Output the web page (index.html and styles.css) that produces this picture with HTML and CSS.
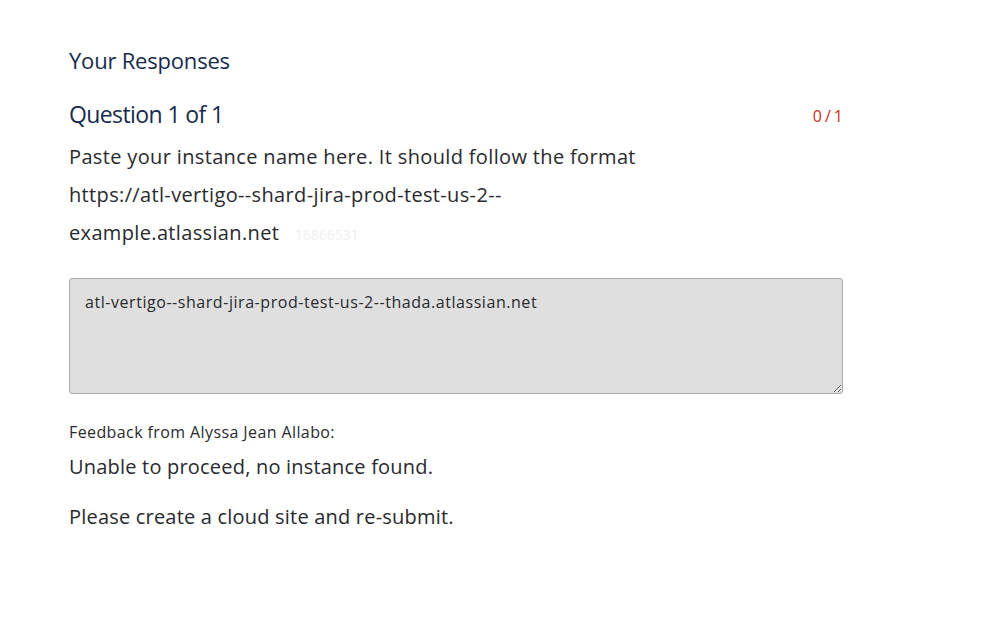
FILE: index.html
```html
<!DOCTYPE html>
<html>
<head>
<meta charset="utf-8">
<link rel="stylesheet" href="styles.css">
</head>
<body>
<main class="page">
  <h2 class="title">Your Responses</h2>
  <div class="qhead">
    <h3 class="qtitle">Question 1 of 1</h3>
    <span class="score">0/1</span>
  </div>
  <p class="prompt">Paste your instance name here. It should follow the format https://atl-vertigo--shard-jira-prod-test-us-2--<br>example.atlassian.net <span class="qid">16866531</span></p>
  <textarea class="answer" readonly>atl-vertigo--shard-jira-prod-test-us-2--thada.atlassian.net</textarea>
  <div class="feedback-label">Feedback from Alyssa Jean Allabo:</div>
  <p class="feedback">Unable to proceed, no instance found.</p>
  <p class="feedback">Please create a cloud site and re-submit.</p>
</main>
</body>
</html>
```
FILE: styles.css
```css
html, body {
  margin: 0;
  padding: 0;
  background: #fff;
}
body {
  font-family: "Open Sans", "Liberation Sans", sans-serif;
  color: #292a2e;
}
.page {
  width: 774px;
  padding: 44px 0 40px 69px;
}
.title {
  margin: 0;
  font-size: 22px;
  font-weight: 400;
  color: #172b4d;
  line-height: 32px;
  letter-spacing: -0.2px;
}
.qhead {
  display: flex;
  justify-content: space-between;
  align-items: center;
  margin-top: 22px;
}
.qtitle {
  margin: 0;
  font-size: 23px;
  font-weight: 400;
  color: #172b4d;
  line-height: 32px;
  letter-spacing: -0.6px;
}
.score {
  color: #d42a20;
  font-size: 16px;
  letter-spacing: 3px;
  padding-top: 4px;
  margin-right: -3px;
}
.prompt {
  margin: 8px 0 0;
  font-size: 20px;
  line-height: 38px;
  width: 620px;
  letter-spacing: 0.35px;
}
.qid {
  color: #f0f0f0;
  font-size: 14px;
  margin-left: 10px;
  letter-spacing: 0;
}
.answer {
  display: block;
  box-sizing: border-box;
  width: 774px;
  height: 116px;
  margin-top: 24px;
  padding: 12px 15px;
  background: #dfdfdf;
  border: 1px solid #aaa;
  border-radius: 3px;
  font-family: inherit;
  font-size: 16px;
  letter-spacing: 0.55px;
  color: #292a2e;
  resize: vertical;
}
.feedback-label {
  margin-top: 27px;
  font-size: 16px;
  letter-spacing: 0.4px;
  color: #292a2e;
}
.feedback {
  margin: 9px 0 0;
  font-size: 20px;
  line-height: 30px;
  letter-spacing: 0.2px;
}
.feedback + .feedback {
  margin-top: 20px;
}
```
